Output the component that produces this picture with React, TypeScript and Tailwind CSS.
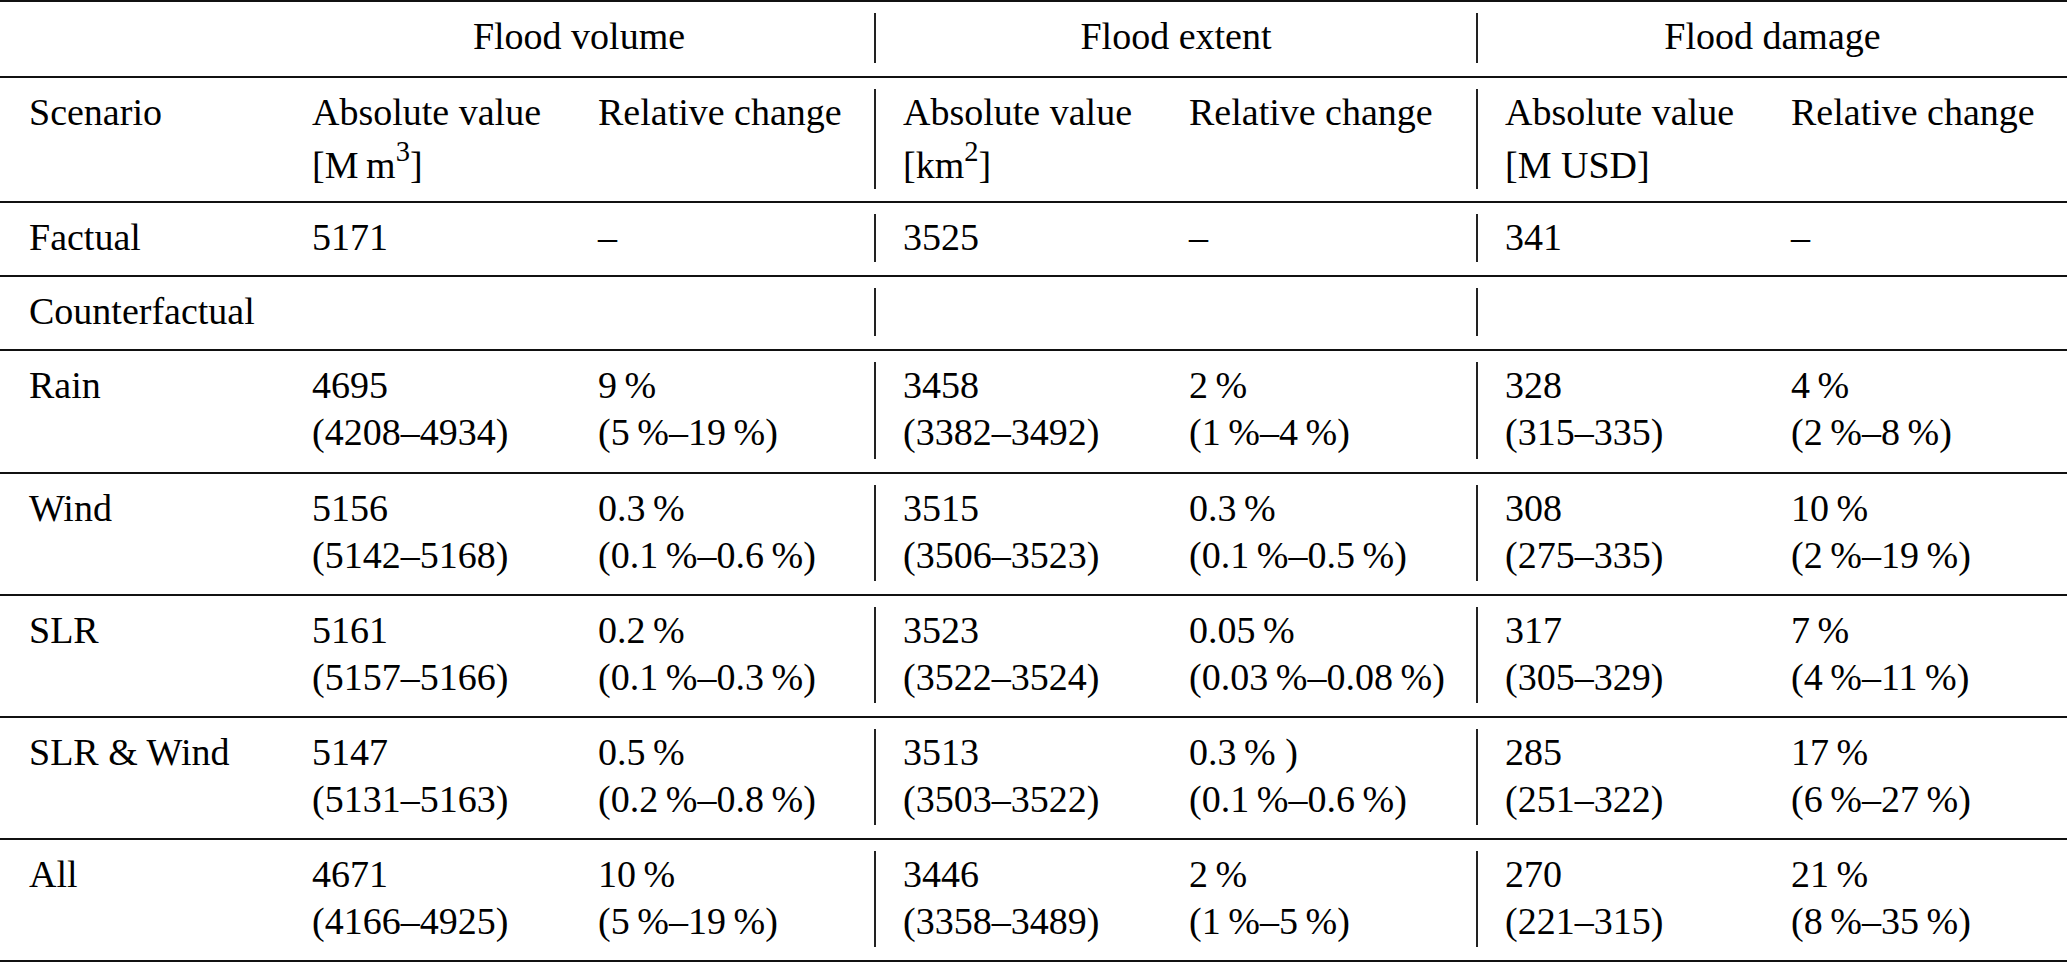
import React from "react";

const T = "\u2009"; // thin space before %

type Row = {
  name: string;
  cells: [string, string][];
  h: string;
};

const grid = "grid grid-cols-[284px_286px_304px_287px_315px_287px_304px]";
const rowBase = "border-t-2 border-[#111] pt-[11px] pb-[13px]";
const sep = "border-l-2 border-[#222] pl-[27px]";

const data: Row[] = [
  {
    name: "Rain",
    h: "h-[123px]",
    cells: [
      ["4695", "(4208–4934)"],
      [`9${T}%`, `(5${T}%–19${T}%)`],
      ["3458", "(3382–3492)"],
      [`2${T}%`, `(1${T}%–4${T}%)`],
      ["328", "(315–335)"],
      [`4${T}%`, `(2${T}%–8${T}%)`],
    ],
  },
  {
    name: "Wind",
    h: "h-[122px]",
    cells: [
      ["5156", "(5142–5168)"],
      [`0.3${T}%`, `(0.1${T}%–0.6${T}%)`],
      ["3515", "(3506–3523)"],
      [`0.3${T}%`, `(0.1${T}%–0.5${T}%)`],
      ["308", "(275–335)"],
      [`10${T}%`, `(2${T}%–19${T}%)`],
    ],
  },
  {
    name: "SLR",
    h: "h-[122px]",
    cells: [
      ["5161", "(5157–5166)"],
      [`0.2${T}%`, `(0.1${T}%–0.3${T}%)`],
      ["3523", "(3522–3524)"],
      [`0.05${T}%`, `(0.03${T}%–0.08${T}%)`],
      ["317", "(305–329)"],
      [`7${T}%`, `(4${T}%–11${T}%)`],
    ],
  },
  {
    name: "SLR & Wind",
    h: "h-[122px]",
    cells: [
      ["5147", "(5131–5163)"],
      [`0.5${T}%`, `(0.2${T}%–0.8${T}%)`],
      ["3513", "(3503–3522)"],
      [`0.3${T}% )`, `(0.1${T}%–0.6${T}%)`],
      ["285", "(251–322)"],
      [`17${T}%`, `(6${T}%–27${T}%)`],
    ],
  },
  {
    name: "All",
    h: "h-[124px] border-b-2",
    cells: [
      ["4671", "(4166–4925)"],
      [`10${T}%`, `(5${T}%–19${T}%)`],
      ["3446", "(3358–3489)"],
      [`2${T}%`, `(1${T}%–5${T}%)`],
      ["270", "(221–315)"],
      [`21${T}%`, `(8${T}%–35${T}%)`],
    ],
  },
];

// padding for columns 2..7 (index 0..5)
const colCls = ["pl-[28px]", "pl-[28px]", sep, "pl-[28px]", sep, "pl-[28px]"];

function Unit({ children }: { children: React.ReactNode }) {
  return <div className="mt-[6px]">{children}</div>;
}

export default function App() {
  return (
    <div className="w-[2067px] bg-white text-black font-['Liberation_Serif'] text-[38px] leading-[47px]">
      {/* group header */}
      <div className={`${grid} ${rowBase} h-[76px]`}>
        <div />
        <div className="col-span-2 text-center">Flood volume</div>
        <div className="col-span-2 border-l-2 border-[#222] text-center">Flood extent</div>
        <div className="col-span-2 border-l-2 border-[#222] text-center">Flood damage</div>
      </div>

      {/* column header */}
      <div className={`${grid} ${rowBase} h-[125px]`}>
        <div className="pl-[29px]">Scenario</div>
        <div className="pl-[28px]">
          Absolute value
          <Unit>
            [M{T}m<sup className="top-[-0.6em]">3</sup>]
          </Unit>
        </div>
        <div className="pl-[28px]">Relative change</div>
        <div className={sep}>
          Absolute value
          <Unit>
            [km<sup className="top-[-0.6em]">2</sup>]
          </Unit>
        </div>
        <div className="pl-[28px]">Relative change</div>
        <div className={sep}>
          Absolute value
          <Unit>[M USD]</Unit>
        </div>
        <div className="pl-[28px]">Relative change</div>
      </div>

      {/* factual */}
      <div className={`${grid} ${rowBase} h-[74px]`}>
        <div className="pl-[29px]">Factual</div>
        <div className="pl-[28px]">5171</div>
        <div className="pl-[28px]">–</div>
        <div className={sep}>3525</div>
        <div className="pl-[28px]">–</div>
        <div className={sep}>341</div>
        <div className="pl-[28px]">–</div>
      </div>

      {/* counterfactual label */}
      <div className={`${grid} ${rowBase} h-[74px]`}>
        <div className="pl-[29px] whitespace-nowrap">Counterfactual</div>
        <div />
        <div />
        <div className={sep} />
        <div />
        <div className={sep} />
        <div />
      </div>

      {data.map((r) => (
        <div key={r.name} className={`${grid} ${rowBase} ${r.h}`}>
          <div className="pl-[29px] whitespace-nowrap">{r.name}</div>
          {r.cells.map((c, i) => (
            <div key={i} className={`${colCls[i]} whitespace-nowrap`}>
              <div>{c[0]}</div>
              <div>{c[1]}</div>
            </div>
          ))}
        </div>
      ))}
    </div>
  );
}
